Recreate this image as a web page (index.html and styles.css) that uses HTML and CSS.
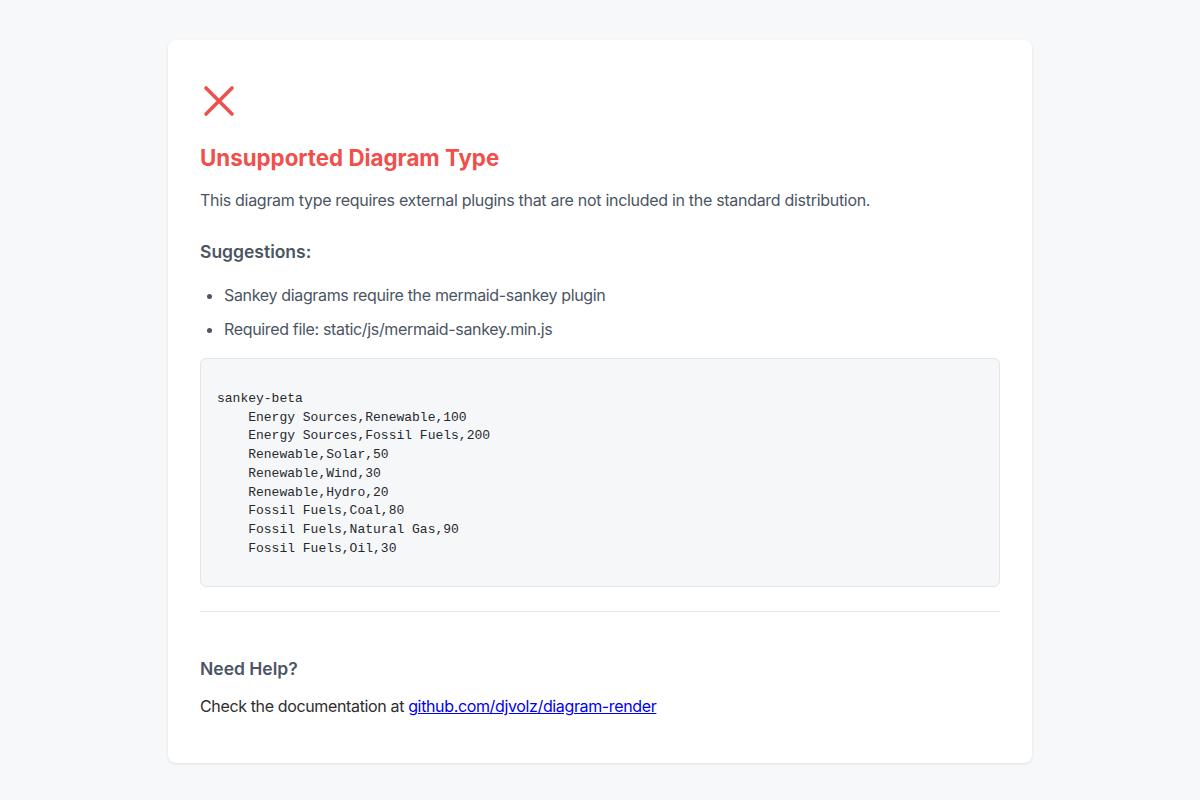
FILE: index.html
```html
<!DOCTYPE html>
<html lang="en">
<head>
<meta charset="utf-8">
<title>Unsupported Diagram Type</title>
<link rel="stylesheet" href="styles.css">
</head>
<body>
<main class="card">
  <div class="icon">
    <svg width="32" height="32" viewBox="0 0 32 32" aria-hidden="true">
      <path d="M3 3 L29 29 M29 3 L3 29" stroke="#f0504c" stroke-width="3.6" stroke-linecap="round" fill="none"/>
    </svg>
  </div>
  <h1 class="title">Unsupported Diagram Type</h1>
  <p class="lead">This diagram type requires external plugins that are not included in the standard distribution.</p>
  <h2 class="subhead">Suggestions:</h2>
  <ul class="suggestions">
    <li>Sankey diagrams require the mermaid-sankey plugin</li>
    <li>Required file: static/js/mermaid-sankey.min.js</li>
  </ul>
  <pre class="code">

sankey-beta
    Energy Sources,Renewable,100
    Energy Sources,Fossil Fuels,200
    Renewable,Solar,50
    Renewable,Wind,30
    Renewable,Hydro,20
    Fossil Fuels,Coal,80
    Fossil Fuels,Natural Gas,90
    Fossil Fuels,Oil,30

</pre>
  <hr class="divider">
  <section class="help">
    <h2 class="subhead help-title">Need Help?</h2>
    <p class="help-text">Check the documentation at <a href="#">github.com/djvolz/diagram-render</a></p>
  </section>
</main>
</body>
</html>
```
FILE: styles.css
```css
* { box-sizing: border-box; }
html, body { margin: 0; }
body {
  background: #f7f8fa;
  font-family: Inter, "Noto Sans", "Liberation Sans", sans-serif;
  padding: 40px 0 37px;
}
.card {
  width: 864px;
  margin: 0 auto;
  background: #fff;
  border-radius: 8px;
  box-shadow: 0 1px 3px rgba(0,0,0,0.1);
  padding: 32px 32px 32px;
}
.icon {
  padding-top: 13px;
  height: 45px;
  padding-left: 3px;
}
.icon svg { display: block; }
.title {
  margin: 27px 0 0;
  font-size: 22.3px;
  line-height: 28px;
  font-weight: 700;
  color: #f0504c;
}
.lead {
  margin: 16px 0 0;
  font-size: 16px;
  line-height: 24px;
  color: #4b5563;
  letter-spacing: -0.3px;
}
.subhead {
  margin: 27px 0 0;
  font-size: 17.5px;
  line-height: 26px;
  font-weight: 600;
  color: #4b5563;
}
.suggestions {
  margin: 18px 0 0;
  padding-left: 24px;
  color: #4b5563;
  font-size: 16px;
  line-height: 24px;
  letter-spacing: -0.34px;
}
.suggestions li + li { margin-top: 10px; }
.code {
  margin: 17px 0 0;
  background: #f6f7f9;
  border: 1px solid #e3e5e8;
  border-radius: 6px;
  padding: 12px 16px 9px;
  font-family: "Liberation Mono", "Courier New", monospace;
  font-size: 13px;
  line-height: 18.75px;
  color: #24292e;
}
.divider {
  margin: 24px 0 0;
  border: 0;
  border-top: 1px solid #e5e7eb;
  height: 0;
}
.help { padding-top: 18px; }
.help-title { margin-top: 26px; }
.help-text {
  margin: 12px 0 0;
  font-size: 16px;
  line-height: 24px;
  color: #2d2d2d;
  padding-bottom: 13px;
  letter-spacing: -0.36px;
}
.help-text a { color: #0000ee; text-decoration: underline; }
```
